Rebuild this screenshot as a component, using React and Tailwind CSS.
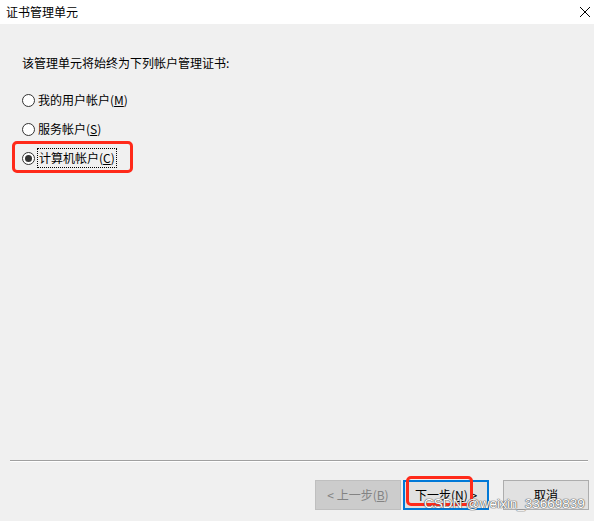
export default function App() {
  const font = { fontFamily: '"Noto Sans CJK SC", "Noto Sans", sans-serif' };
  const Radio = ({ checked }) => (
    <span className="relative inline-flex h-[13px] w-[13px] shrink-0 items-center justify-center rounded-full border border-[#333333] bg-white">
      {checked && <span className="h-[7px] w-[7px] rounded-full bg-[#333333]" />}
    </span>
  );
  return (
    <div className="relative flex h-[521px] w-[594px] flex-col overflow-hidden bg-[#f0f0f0] text-[12px] text-black" style={font}>
      <div className="flex h-[24px] shrink-0 items-center justify-between bg-white pl-[6px] pr-[3px]">
        <span className="text-[12px] leading-none">证书管理单元</span>
        <svg width="12" height="12" viewBox="0 0 12 12">
          <path d="M1 1 L11 11 M11 1 L1 11" stroke="#000" strokeWidth="1" />
        </svg>
      </div>
      <div className="flex flex-1 flex-col pl-[22px] pt-[31px]">
        <div className="h-[16px] leading-[16px]">该管理单元将始终为下列帐户管理证书:</div>
        <div className="mt-[21px] flex flex-col gap-[13px]">
          <label className="flex h-[16px] items-center gap-[3px] leading-[16px]">
            <Radio />
            <span>我的用户帐户(<span className="underline">M</span>)</span>
          </label>
          <label className="flex h-[16px] items-center gap-[3px] leading-[16px]">
            <Radio />
            <span>服务帐户(<span className="underline">S</span>)</span>
          </label>
          <label className="flex h-[16px] items-center gap-[2px] leading-[16px]">
            <Radio checked />
            <span className="border border-dotted border-black px-[1px] leading-[18px]">计算机帐户(<span className="underline">C</span>)</span>
          </label>
        </div>
      </div>
      <div className="mx-[10px] mr-[6px] h-[2px] shrink-0 border-t border-[#a0a0a0] border-b-white border-b" />
      <div className="flex h-[59px] shrink-0 items-start justify-end pr-[5px] pt-[18px]">
        <button className="flex h-[30px] w-[86px] items-center justify-center border border-[#bfbfbf] bg-[#cccccc] text-[#838383]">
          &lt; 上一步(<span className="underline">B</span>)
        </button>
        <button className="ml-[2px] flex h-[30px] w-[86px] items-center justify-center border-2 border-[#0078d7] bg-[#e1e1e1] text-black">
          下一步(<span className="underline">N</span>) &gt;
        </button>
        <button className="ml-[14px] flex h-[30px] w-[86px] items-center justify-center border border-[#adadad] bg-[#e1e1e1] text-black">
          取消
        </button>
      </div>
      <div className="pointer-events-none absolute left-[12px] top-[141px] h-[32px] w-[121px] rounded-[5px] border-[3px] border-[#ff2a1a]" />
      <div className="pointer-events-none absolute left-[406px] top-[476px] h-[30px] w-[67px] rounded-[5px] border-[3px] border-[#ff2a1a]" />
      <div className="pointer-events-none absolute left-[424px] top-[496px] whitespace-nowrap text-[13.5px] leading-[16px] text-white [text-shadow:0_0_1px_#555555,0_0_1px_#555555,0_0_1px_#555555]" style={{ fontFamily: '"Liberation Sans", Arial, sans-serif' }}>
        CSDN @weixin_33669839
      </div>
    </div>
  );
}
